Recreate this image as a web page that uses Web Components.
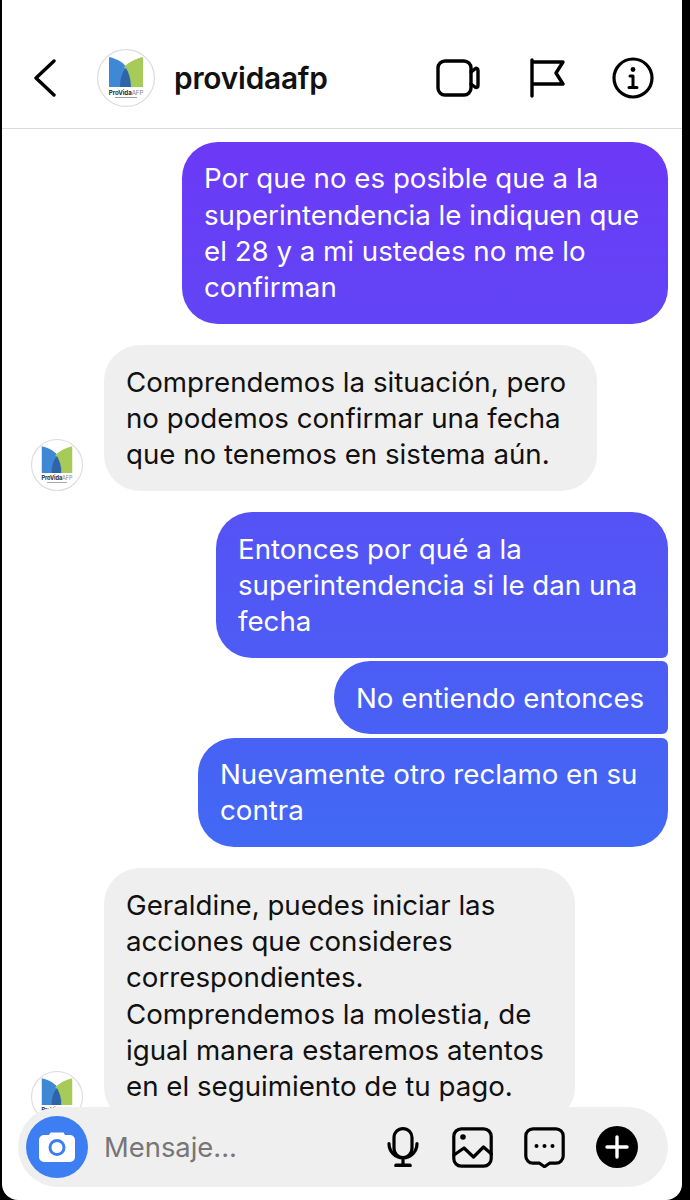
<!DOCTYPE html>
<html lang="es">
<head>
<meta charset="utf-8">
<title>providaafp</title>
<style>
  html, body { margin: 0; background: #000; }
  body { font-family: "Inter", "Liberation Sans", sans-serif; }
</style>
</head>
<body>
<ig-thread>
  <ig-header slot="header" name="providaafp"></ig-header>

  <ig-bubble out width="486" corners="36 36 36 36">Por que no es posible que a la<br>superintendencia le indiquen que<br>el 28 y a mi ustedes no me lo<br>confirman</ig-bubble>
  <ig-bubble width="493" corners="36 36 36 36">Comprendemos la situación, pero<br>no podemos confirmar una fecha<br>que no tenemos en sistema aún.</ig-bubble>
  <ig-bubble out width="452" corners="36 36 6 36">Entonces por qué a la<br>superintendencia si le dan una<br>fecha</ig-bubble>
  <ig-bubble out near width="334" corners="36 6 6 36">No entiendo entonces</ig-bubble>
  <ig-bubble out near width="470" corners="36 6 36 36">Nuevamente otro reclamo en su<br>contra</ig-bubble>
  <ig-bubble width="471" corners="36 36 36 36">Geraldine, puedes iniciar las<br>acciones que consideres<br>correspondientes.<br>Comprendemos la molestia, de<br>igual manera estaremos atentos<br>en el seguimiento de tu pago.</ig-bubble>

  <ig-composer slot="composer" placeholder="Mensaje..."></ig-composer>
</ig-thread>

<script>
  class IgAvatar extends HTMLElement {
    connectedCallback() {
      const size = this.getAttribute('size') || 52;
      this.attachShadow({ mode: 'open' }).innerHTML = `
        <style>
          :host { display: block; width: ${size}px; height: ${size}px; flex: none; }
          svg { display: block; width: 100%; height: 100%; }
          text { font-family: "Inter", "Liberation Sans", sans-serif; }
        </style>
        <svg viewBox="0 0 58 58">
          <circle cx="29" cy="29" r="28.4" fill="#fff" stroke="#dcdcdc" stroke-width="1.2"/>
          <path d="M12 8C21 10 27 14 31 20V38H12Z" fill="#3f88d6"/>
          <path d="M46 8C38 10 32 13 27 18C31 24 34 31 34 38H46Z" fill="#a6cb58"/>
          <path d="M23 38C23 30 25 23 29 19C32 24 34 31 34 38Z" fill="#2f64a8"/>
          <text x="29" y="45.5" text-anchor="middle" font-size="6.2" font-weight="700" fill="#1d2a3a" letter-spacing="-.1">ProVida<tspan font-weight="400" fill="#7c8794">AFP</tspan></text>
          <rect x="18" y="48" width="22" height="1" fill="#9a9fa6"/>
        </svg>`;
    }
  }

  class IgHeader extends HTMLElement {
    connectedCallback() {
      this.attachShadow({ mode: 'open' }).innerHTML = `
        <style>
          :host { display: flex; align-items: center; height: 128px; padding: 0 28px 0 32px; border-bottom: 1px solid #d9dbdb; background: #fff; }
          .left { display: flex; align-items: center; padding-top: 28px; }
          .name { margin-left: 19px; font-size: 29.8px; font-weight: 600; color: #111; letter-spacing: -.2px; }
          .back { margin-right: 40px; }
          .icons { display: flex; align-items: center; margin-left: auto; padding-top: 28px; }
          svg { display: block; fill: none; stroke: #000; stroke-width: 3.4; stroke-linecap: round; stroke-linejoin: round; }
        </style>
        <div class="left">
          <svg class="back" width="23" height="38" viewBox="0 0 23 38"><path d="M20 2 2 19l18 17"/></svg>
          <ig-avatar size="58"></ig-avatar>
          <span class="name">${this.getAttribute('name')}</span>
        </div>
        <div class="icons">
          <svg width="44" height="38" viewBox="0 0 44 38"><rect x="2" y="2" width="33" height="34" rx="7"/><path d="M35 13l4-3.200c1.500-1 3-.4 3 1.600v15c0 2-1.500 2.600-3 1.600L35 25"/></svg>
          <svg style="margin-left:49px" width="36" height="40" viewBox="0 0 36 40"><path d="M3 2v36M3 4h31l-7 11 7 11H3"/></svg>
          <svg style="margin-left:47px" width="42" height="42" viewBox="0 0 42 42"><circle cx="21" cy="21" r="19" stroke-width="3.200"/><circle cx="21" cy="12.500" r="2.400" fill="#000" stroke="none"/><path d="M18 19h3v11M17 30.500h8" stroke-width="3"/></svg>
        </div>`;
    }
  }

  class IgBubble extends HTMLElement {
    connectedCallback() {
      const out = this.hasAttribute('out');
      const corners = this.getAttribute('corners').split(' ').map(c => c + 'px').join(' ');
      this.attachShadow({ mode: 'open' }).innerHTML = `
        <style>
          :host { display: flex; align-items: flex-end; justify-content: ${out ? 'flex-end' : 'flex-start'}; margin-top: ${this.hasAttribute('near') ? 3.5 : 21.5}px; }
          :host(:first-of-type) { margin-top: 0; }
          .text {
            box-sizing: border-box; width: ${this.getAttribute('width')}px; padding: 18.3px 22px;
            border-radius: ${corners}; font-size: 27.7px; line-height: 36.3px; white-space: nowrap;
          }
          .out { color: #fff; background: linear-gradient(180deg, #6c39f6 142px, #4169f4 850px) fixed; }
          .in { color: #111; background: #efefef; margin-left: 21px; }
        </style>
        ${out ? '' : '<ig-avatar size="52"></ig-avatar>'}
        <div class="text ${out ? 'out' : 'in'}"><slot></slot></div>`;
    }
  }

  class IgComposer extends HTMLElement {
    connectedCallback() {
      this.attachShadow({ mode: 'open' }).innerHTML = `
        <style>
          :host { display: flex; align-items: center; height: 80px; padding: 0 30px 0 8px; border-radius: 40px; background: #efefef; }
          .cam { width: 62px; height: 62px; border-radius: 50%; background: #3d7ff2; display: flex; align-items: center; justify-content: center; flex: none; }
          .hint { margin-left: 16px; font-size: 27.4px; color: #767676; }
          .icons { display: flex; align-items: center; margin-left: auto; }
          svg { display: block; }
          .line { fill: none; stroke: #000; stroke-width: 3.200; stroke-linecap: round; stroke-linejoin: round; }
        </style>
        <div class="cam">
          <svg width="36" height="30" viewBox="0 0 36 30">
            <path d="M5 3h5l1.500-2.500h13L26 3h5a5 5 0 0 1 5 5v17a5 5 0 0 1-5 5H5a5 5 0 0 1-5-5V8a5 5 0 0 1 5-5Z" fill="#fff"/>
            <circle cx="18" cy="15.500" r="7" fill="none" stroke="#3d7ff2" stroke-width="3"/>
          </svg>
        </div>
        <span class="hint">${this.getAttribute('placeholder')}</span>
        <div class="icons">
          <svg class="line" width="32" height="40" viewBox="0 0 32 40"><rect x="7" y="1.600" width="18" height="29" rx="9"/><path d="M2 16.500c0 8 6 14.500 14 14.500s14-6.500 14-14.500M16 31v7"/><path d="M9 38.400h14" stroke-width="3.600"/></svg>
          <svg class="line" style="margin-left:33px" width="41" height="41" viewBox="0 0 41 41"><rect x="1.800" y="1.800" width="37.400" height="37.400" rx="7.500"/><circle cx="11" cy="10" r="2.800" fill="#000" stroke="none"/><path d="M2 28l10-7 9.500 9 10-10 8 7"/></svg>
          <svg class="line" style="margin-left:31px" width="41" height="41" viewBox="0 0 41 41"><path d="M9 1.800h23a7.200 7.200 0 0 1 7.200 7.200v20a7.200 7.200 0 0 1-7.200 7.200h-6.500l-5 3.500-5-3.500H9A7.200 7.200 0 0 1 1.800 29V9A7.200 7.200 0 0 1 9 1.800Z"/><g fill="#000" stroke="none"><circle cx="12.500" cy="19" r="2"/><circle cx="20.500" cy="19" r="2"/><circle cx="28.500" cy="19" r="2"/></g></svg>
          <svg style="margin-left:31px" width="42" height="42" viewBox="0 0 42 42"><circle cx="21" cy="21" r="21" fill="#000"/><path d="M21 11v20M11 21h20" stroke="#fff" stroke-width="3.400" stroke-linecap="round"/></svg>
        </div>`;
    }
  }

  class IgThread extends HTMLElement {
    constructor() {
      super();
      this.attachShadow({ mode: 'open' }).innerHTML = `
        <style>
          :host { display: block; position: relative; box-sizing: border-box; width: 680px; height: 1200px; margin-left: 2px; overflow: hidden; border-radius: 0 0 16px 16px; background: #fff; }
          .list { padding: 13px 14px 0 29px; }
          .composer { position: absolute; left: 16px; right: 14px; top: 1107px; }
        </style>
        <slot name="header"></slot>
        <div class="list"><slot></slot></div>
        <div class="composer"><slot name="composer"></slot></div>`;
    }
  }

  customElements.define('ig-avatar', IgAvatar);
  customElements.define('ig-header', IgHeader);
  customElements.define('ig-bubble', IgBubble);
  customElements.define('ig-composer', IgComposer);
  customElements.define('ig-thread', IgThread);
</script>
</body>
</html>
